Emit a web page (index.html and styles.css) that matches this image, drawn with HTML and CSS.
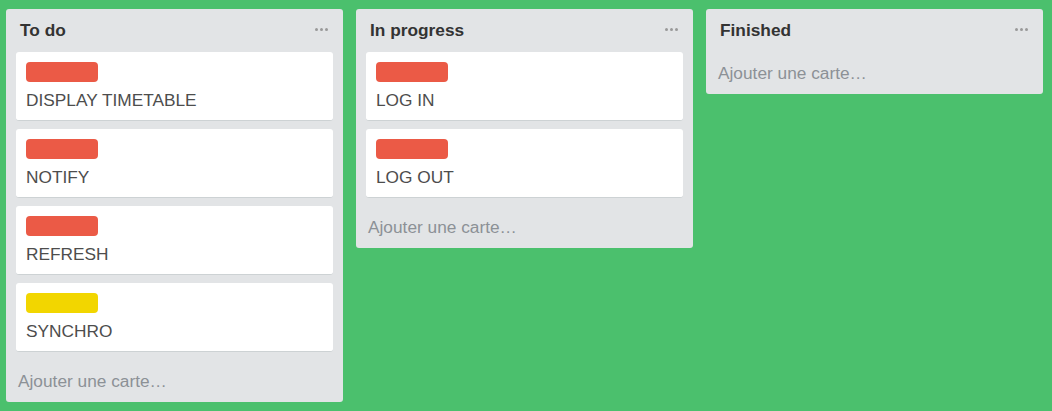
FILE: index.html
```html
<!DOCTYPE html>
<html lang="fr">
<head>
<meta charset="utf-8">
<title>Board</title>
<link rel="stylesheet" href="styles.css">
</head>
<body>
<div class="board">
  <section class="list">
    <header class="list-header">
      <h2 class="list-title">To do</h2>
      <span class="menu"><i></i><i></i><i></i></span>
    </header>
    <div class="cards">
      <div class="card"><span class="label red"></span><p class="card-title">DISPLAY TIMETABLE</p></div>
      <div class="card"><span class="label red"></span><p class="card-title">NOTIFY</p></div>
      <div class="card"><span class="label red"></span><p class="card-title">REFRESH</p></div>
      <div class="card"><span class="label yellow"></span><p class="card-title">SYNCHRO</p></div>
    </div>
    <div class="add">Ajouter une carte…</div>
  </section>
  <section class="list">
    <header class="list-header">
      <h2 class="list-title">In progress</h2>
      <span class="menu"><i></i><i></i><i></i></span>
    </header>
    <div class="cards">
      <div class="card"><span class="label red"></span><p class="card-title">LOG IN</p></div>
      <div class="card"><span class="label red"></span><p class="card-title">LOG OUT</p></div>
    </div>
    <div class="add">Ajouter une carte…</div>
  </section>
  <section class="list">
    <header class="list-header">
      <h2 class="list-title">Finished</h2>
      <span class="menu"><i></i><i></i><i></i></span>
    </header>
    <div class="cards"></div>
    <div class="add">Ajouter une carte…</div>
  </section>
</div>
</body>
</html>
```

FILE: styles.css
```css
html, body {
  margin: 0;
  padding: 0;
  background: #4bc06d;
  height: 100%;
}
body {
  font-family: "Liberation Sans", Arial, sans-serif;
}
.board {
  display: flex;
  align-items: flex-start;
  gap: 13px;
  padding: 9px 0 0 6px;
}
.list {
  width: 337px;
  background: #e2e4e6;
  border-radius: 3px;
  padding-bottom: 11px;
}
.list-header {
  display: flex;
  align-items: center;
  justify-content: space-between;
  padding: 11px 15px 0 14px;
  height: 20px;
}
.list-title {
  margin: 0;
  font-size: 17.3px;
  line-height: 20px;
  font-weight: bold;
  color: #333;
}
.menu {
  display: flex;
  gap: 1.5px;
  margin-top: -1px;
}
.menu i {
  width: 3.5px;
  height: 3.5px;
  border-radius: 50%;
  background: #999;
  display: block;
}
.cards {
  margin-top: 12px;
  padding: 0 10px;
}
.cards:empty {
  margin-top: 12px;
}
.card {
  background: #fff;
  border-radius: 3px;
  border-bottom: 1px solid #cdd2d4;
  padding: 10px;
  margin-bottom: 8px;
}
.label {
  display: block;
  width: 72px;
  height: 20px;
  border-radius: 4px;
}
.label.red { background: #eb5a46; }
.label.yellow { background: #f2d600; }
.card-title {
  margin: 8px 0 0;
  font-size: 17.3px;
  line-height: 20px;
  color: #4d4d4d;
}
.add {
  padding: 11px 12px 0;
  font-size: 17.3px;
  line-height: 20px;
  color: #8c9196;
}
```
